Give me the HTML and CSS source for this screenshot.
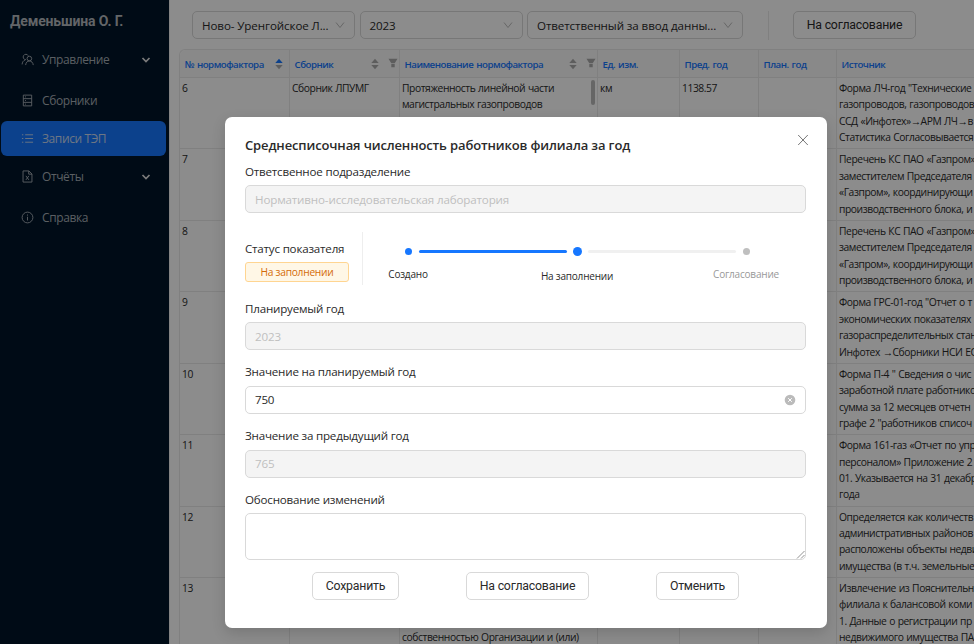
FILE: index.html
```html
<!DOCTYPE html>
<html lang="ru">
<head>
<meta charset="utf-8">
<title>Записи ТЭП</title>
<link rel="stylesheet" href="styles.css">
</head>
<body>
<div class="app">
  <aside class="sidebar">
    <div class="user">Деменьшина О. Г.</div>
    <nav class="menu">
      <a class="item group"><svg class="ico" viewBox="0 0 14 14"><path d="M5.200 7.200a2.900 2.900 0 1 1 2.600-4.300M1.200 12.300c.1-2.400 1.400-4.200 3.500-5"/><circle cx="9" cy="6" r="2.500"/><path d="M5 13c.2-2.700 1.700-4.400 4-4.400s3.900 1.700 4.200 4.400"/></svg><span>Управление</span><svg class="caret" viewBox="0 0 10 10"><path d="M1.500 3l3.500 3.500L8.500 3"/></svg></a>
      <a class="item"><svg class="ico" viewBox="0 0 14 14"><path d="M2.500 1.200h9v11.600h-9zM2.500 5h9M2.500 9h9M4.300 3.100h1M4.300 7h1M4.300 10.900h1"/></svg><span>Сборники</span></a>
      <a class="item active"><svg class="ico" viewBox="0 0 14 14"><path d="M4.500 3h8.500M4.500 7h8.500M4.500 11h8.500M1 3h1.500M1 7h1.500M1 11h1.500"/></svg><span>Записи ТЭП</span></a>
      <a class="item group"><svg class="ico" viewBox="0 0 14 14"><path d="M2.200 1h6.300l3.300 3.300V13H2.200zM8.300 1v3.500h3.500M5.300 6.300l3.200 4.400M8.500 6.300l-3.200 4.400"/></svg><span>Отчёты</span><svg class="caret" viewBox="0 0 10 10"><path d="M1.500 3l3.500 3.500L8.500 3"/></svg></a>
      <a class="item"><svg class="ico" viewBox="0 0 14 14"><circle cx="7" cy="7" r="5.800"/><path d="M7 6.200v4M7 3.800v1.200"/></svg><span>Справка</span></a>
    </nav>
  </aside>
  <main class="content">
    <div class="toolbar">
      <div class="select s1"><span>Ново- Уренгойское Л...</span><svg class="down" viewBox="0 0 10 10"><path d="M1 2.500l4 5 4-5"/></svg></div>
      <div class="select s2"><span>2023</span><svg class="down" viewBox="0 0 10 10"><path d="M1 2.500l4 5 4-5"/></svg></div>
      <div class="select s3"><span>Ответственный за ввод данны...</span><svg class="down" viewBox="0 0 10 10"><path d="M1 2.500l4 5 4-5"/></svg></div>
      <i class="sep"></i>
      <button class="btn">На согласование</button>
    </div>
    <div class="table">
      <div class="row head">
        <div class="th"><span>№ нормофактора</span><svg class="sort on" viewBox="0 0 8 12"><path class="up" d="M.3 5L4 .8 7.700 5z"/><path d="M.3 7L4 11.200 7.700 7z"/></svg></div>
        <div class="th"><span>Сборник</span><svg class="sort" viewBox="0 0 8 12"><path d="M.3 5L4 .8 7.700 5z"/><path d="M.3 7L4 11.200 7.700 7z"/></svg><svg class="filter" viewBox="0 0 10 10"><path d="M.5.800h9L6.700 5.300H3.300zM3.300 6h3.400v3.200H3.300z"/></svg></div>
        <div class="th"><span>Наименование нормофактора</span><svg class="sort" viewBox="0 0 8 12"><path d="M.3 5L4 .8 7.700 5z"/><path d="M.3 7L4 11.200 7.700 7z"/></svg><svg class="filter" viewBox="0 0 10 10"><path d="M.5.800h9L6.700 5.300H3.300zM3.300 6h3.400v3.200H3.300z"/></svg></div>
        <div class="th"><span>Ед. изм.</span></div>
        <div class="th"><span>Пред. год</span></div>
        <div class="th"><span>План. год</span></div>
        <div class="th"><span>Источник</span></div>
      </div>
      <div class="row"><div>6</div><div>Сборник ЛПУМГ</div><div class="name">Протяженность линейной части<br>магистральных газопроводов<i class="thumb"></i></div><div>км</div><div>1138.57</div><div></div><div>Форма ЛЧ-год "Технические<br>газопроводов, газопроводов<br>ССД «Инфотех»→АРМ ЛЧ→в<br>Статистика Согласовывается</div></div>
      <div class="row"><div>7</div><div></div><div></div><div></div><div></div><div></div><div>Перечень КС ПАО «Газпром»<br>заместителем Председателя<br>«Газпром», координирующи<br>производственного блока, и</div></div>
      <div class="row"><div>8</div><div></div><div></div><div></div><div></div><div></div><div>Перечень КС ПАО «Газпром»<br>заместителем Председателя<br>«Газпром», координирующи<br>производственного блока, и</div></div>
      <div class="row"><div>9</div><div></div><div></div><div></div><div></div><div></div><div>Форма ГРС-01-год "Отчет о т<br>экономических показателях<br>газораспределительных стан<br>Инфотех →Сборники НСИ ЕС</div></div>
      <div class="row"><div>10</div><div></div><div></div><div></div><div></div><div></div><div>Форма П-4 " Сведения о чис<br>заработной плате работнико<br>сумма за 12 месяцев отчетн<br>графе 2 "работников списоч</div></div>
      <div class="row"><div>11</div><div></div><div></div><div></div><div></div><div></div><div>Форма 161-газ «Отчет по упр<br>персоналом» Приложение 2<br>01. Указывается на 31 декабр<br>года</div></div>
      <div class="row"><div>12</div><div></div><div></div><div></div><div></div><div></div><div>Определяется как количеств<br>административных районов<br>расположены объекты недви<br>имущества (в т.ч. земельные</div></div>
      <div class="row"><div>13</div><div></div><div class="end">собственностью Организации и (или)</div><div></div><div></div><div></div><div>Извлечение из Пояснительн<br>филиала к балансовой коми<br>1. Данные о регистрации пр<br>недвижимого имущества ПА</div></div>
    </div>
  </main>
</div>
<div class="mask">
  <section class="modal">
    <svg class="close" viewBox="0 0 12 12"><path d="M1.200 1l9.600 10M10.800 1L1.200 11"/></svg>
    <h1>Среднесписочная численность работников филиала за год</h1>
    <label class="l1">Ответсвенное подразделение</label>
    <div class="input off">Нормативно-исследовательская лаборатория</div>
    <div class="status">
      <div class="state"><label>Статус показателя</label><span class="tag">На заполнении</span></div>
      <div class="steps">
        <div class="step"><i class="dot"></i><span>Создано</span></div>
        <i class="line done"></i>
        <div class="step current"><i class="dot"></i><span>На заполнении</span></div>
        <i class="line"></i>
        <div class="step wait"><i class="dot"></i><span>Согласование</span></div>
      </div>
    </div>
    <label class="l2">Планируемый год</label>
    <div class="input off">2023</div>
    <label>Значение на планируемый год</label>
    <div class="input"><span>750</span><svg class="clear" viewBox="0 0 12 12"><circle cx="6" cy="6" r="5.300"/><path d="M4.200 4.200l3.600 3.600M7.800 4.200L4.200 7.800"/></svg></div>
    <label>Значение за предыдущий год</label>
    <div class="input off">765</div>
    <label>Обоснование изменений</label>
    <div class="area"><svg class="grip" viewBox="0 0 9 9"><path d="M1 8.500L8.500 1M5 8.500L8.500 5"/></svg></div>
    <div class="actions"><button class="btn b1">Сохранить</button><button class="btn b2">На согласование</button><button class="btn b3">Отменить</button></div>
  </section>
</div>
</body>
</html>
```
FILE: styles.css
```css
* { box-sizing: border-box; }
body { margin: 0; height: 644px; overflow: hidden; font-family: "Open Sans", "Noto Sans", sans-serif; font-size: 11.600px; letter-spacing: -.2px; color: #2a2a2a; }
svg { fill: none; stroke: currentColor; flex: none; }
.app { display: flex; width: 974px; height: 644px; overflow: hidden; background: #fff; }

.sidebar { width: 169px; flex: none; background: #001529; color: #a6adb4; }
.user { height: 40px; padding: 11px 0 0 10px; font: bold 14px/20px Roboto, sans-serif; letter-spacing: -.15px; color: #b4b8bd; white-space: nowrap; }
.menu { display: flex; flex-direction: column; padding: 2px 3px 0 1px; }
.item { display: flex; align-items: center; height: 35px; padding: 0 15px 0 20px; margin-bottom: 3px; border-radius: 6px; font-size: 12px; letter-spacing: -.4px; }
.item.group { margin-bottom: 6px; }
.item span { margin-left: 8px; flex: 1; }
.item.active { background: #1677ff; color: #c8d8f0; }
.ico { width: 13px; height: 13px; stroke-width: 1; }
.caret { width: 10px; height: 10px; stroke-width: 1.700; color: #e0e0e0; }

.content { flex: 1; min-width: 0; padding-left: 9px; border-left: 1px solid #eee; }
.toolbar { display: flex; padding: 11px 0 0 13px; height: 49px; }
.select { display: flex; align-items: center; height: 28px; border: 1px solid #d9d9d9; border-radius: 5px; padding: 0 9px 0 9px; margin-right: 4.500px; white-space: nowrap; }
.select span { flex: 1; letter-spacing: -.1px; }
.s1 { width: 163px; }
.s2 { width: 163px; }
.s3 { width: 215.500px; }
.down { width: 10px; height: 10px; color: #bbb; }
.sep { width: 1px; height: 29px; margin: 0 24px 0 21px; background: #eaeaea; }
.btn { height: 28px; padding: 0; background: #fff; border: 1px solid #d9d9d9; border-radius: 5px; color: #2a2a2a; font: 12.300px Roboto, sans-serif; letter-spacing: -.2px; width: 123px; white-space: nowrap; }

.table { width: 1000px; border: 1px solid #eaeaea; border-right: 0; border-radius: 6px 0 0 0; font-size: 10.300px; letter-spacing: -.43px; word-spacing: .5px; line-height: 16.400px; }
.row { display: grid; grid-template-columns: 110px 110px 198px 82px 79px 78px 1fr; height: 71.450px; white-space: nowrap; border-bottom: 1px solid #eaeaea; }
.row > div { border-right: 1px solid #eaeaea; padding: 2px 0 0 2px; }
.row.head { height: 28px; color: #1677ff; background: #fafafa; font-weight: 600; font-size: 9.700px; letter-spacing: -.5px; word-spacing: 1px; border-radius: 6px 0 0 0; }
.row > .th { display: flex; align-items: center; padding: 3px 0 0 4.500px; }
.th span { flex: 1; }
.sort { width: 8px; height: 12px; margin: -3px 6px 0 0; fill: #aaa; stroke: none; }
.sort .up { fill: inherit; }
.on .up { fill: #1677ff; }
.filter { width: 10px; height: 10px; margin: -4px 1px 0 3px; fill: #aaa; stroke: none; }
.row > .name { display: flex; justify-content: space-between; }
.thumb { width: 4px; height: 25px; margin-right: 2px; border-radius: 2px; background: #bbb; }
.row > .end { padding-top: 51px; }

.mask { position: absolute; inset: 0; background: rgba(0, 0, 0, .45); overflow: hidden; }
.modal { position: absolute; left: 225px; top: 117px; width: 602px; height: 511px; padding: 19px 21px 0 20px; background: #fff; border-radius: 7px; box-shadow: 0 5px 14px rgba(0, 0, 0, .15); }
.close { position: absolute; right: 18px; top: 17px; width: 12px; height: 12px; color: #777; }
h1 { margin: 0; font-size: 13px; line-height: 18px; letter-spacing: -.13px; font-weight: 600; white-space: nowrap; }
label { display: block; height: 18px; line-height: 18px; margin: 13.250px 0 4.500px; white-space: nowrap; }
.l1 { margin: 9px 0 4px; }
.l2 { margin: 15px 0 4px; }
.input { display: flex; align-items: center; justify-content: space-between; height: 28px; border: 1px solid #d9d9d9; border-radius: 5px; padding: 0 9px; }
.input.off { background: #f4f4f4; color: #bfbfbf; letter-spacing: -.15px; }
.clear { width: 12px; height: 12px; fill: #bbb; stroke: none; }
.clear path { stroke: #fff; }
.status { display: flex; height: 53px; margin-top: 19px; }
.state { width: 118px; padding-top: 8px; border-right: 1px solid #eee; }
.state label { margin: 0 0 3.500px; }
.tag { display: block; width: 104px; height: 20px; border: 1px solid #ffd591; border-radius: 3px; background: #fff7e6; color: #d46b08; font-size: 10.200px; letter-spacing: -.25px; line-height: 18px; text-align: center; }
.steps { display: flex; flex: 1; padding: 16px 0 0 41px; font-size: 10px; }
.step { width: 8px; display: flex; flex-direction: column; align-items: center; white-space: nowrap; line-height: 16px; }
.step span { margin-top: 11px; }
.dot { flex: none; width: 7px; height: 7px; border-radius: 50%; background: #1677ff; }
.current .dot { width: 9px; height: 9px; margin-top: -1px; }
.current span { margin-top: 12px; }
.wait { color: #999; }
.wait .dot { background: #bfbfbf; }
.line { width: 148px; height: 3px; border-radius: 2px; margin: 2px 6px 0 7px; background: #f0f0f0; }
.line.done { background: #1677ff; }
.area { display: flex; align-items: flex-end; justify-content: flex-end; height: 47px; border: 1px solid #d9d9d9; border-radius: 5px; }
.grip { width: 9px; height: 9px; color: #777; stroke-width: .8; }
.actions { display: flex; padding: 12px 0 0 67px; }
.b1 { width: 87px; margin-right: 67px; }
.b2 { margin-right: 67px; }
.b3 { width: 83px; }
```
